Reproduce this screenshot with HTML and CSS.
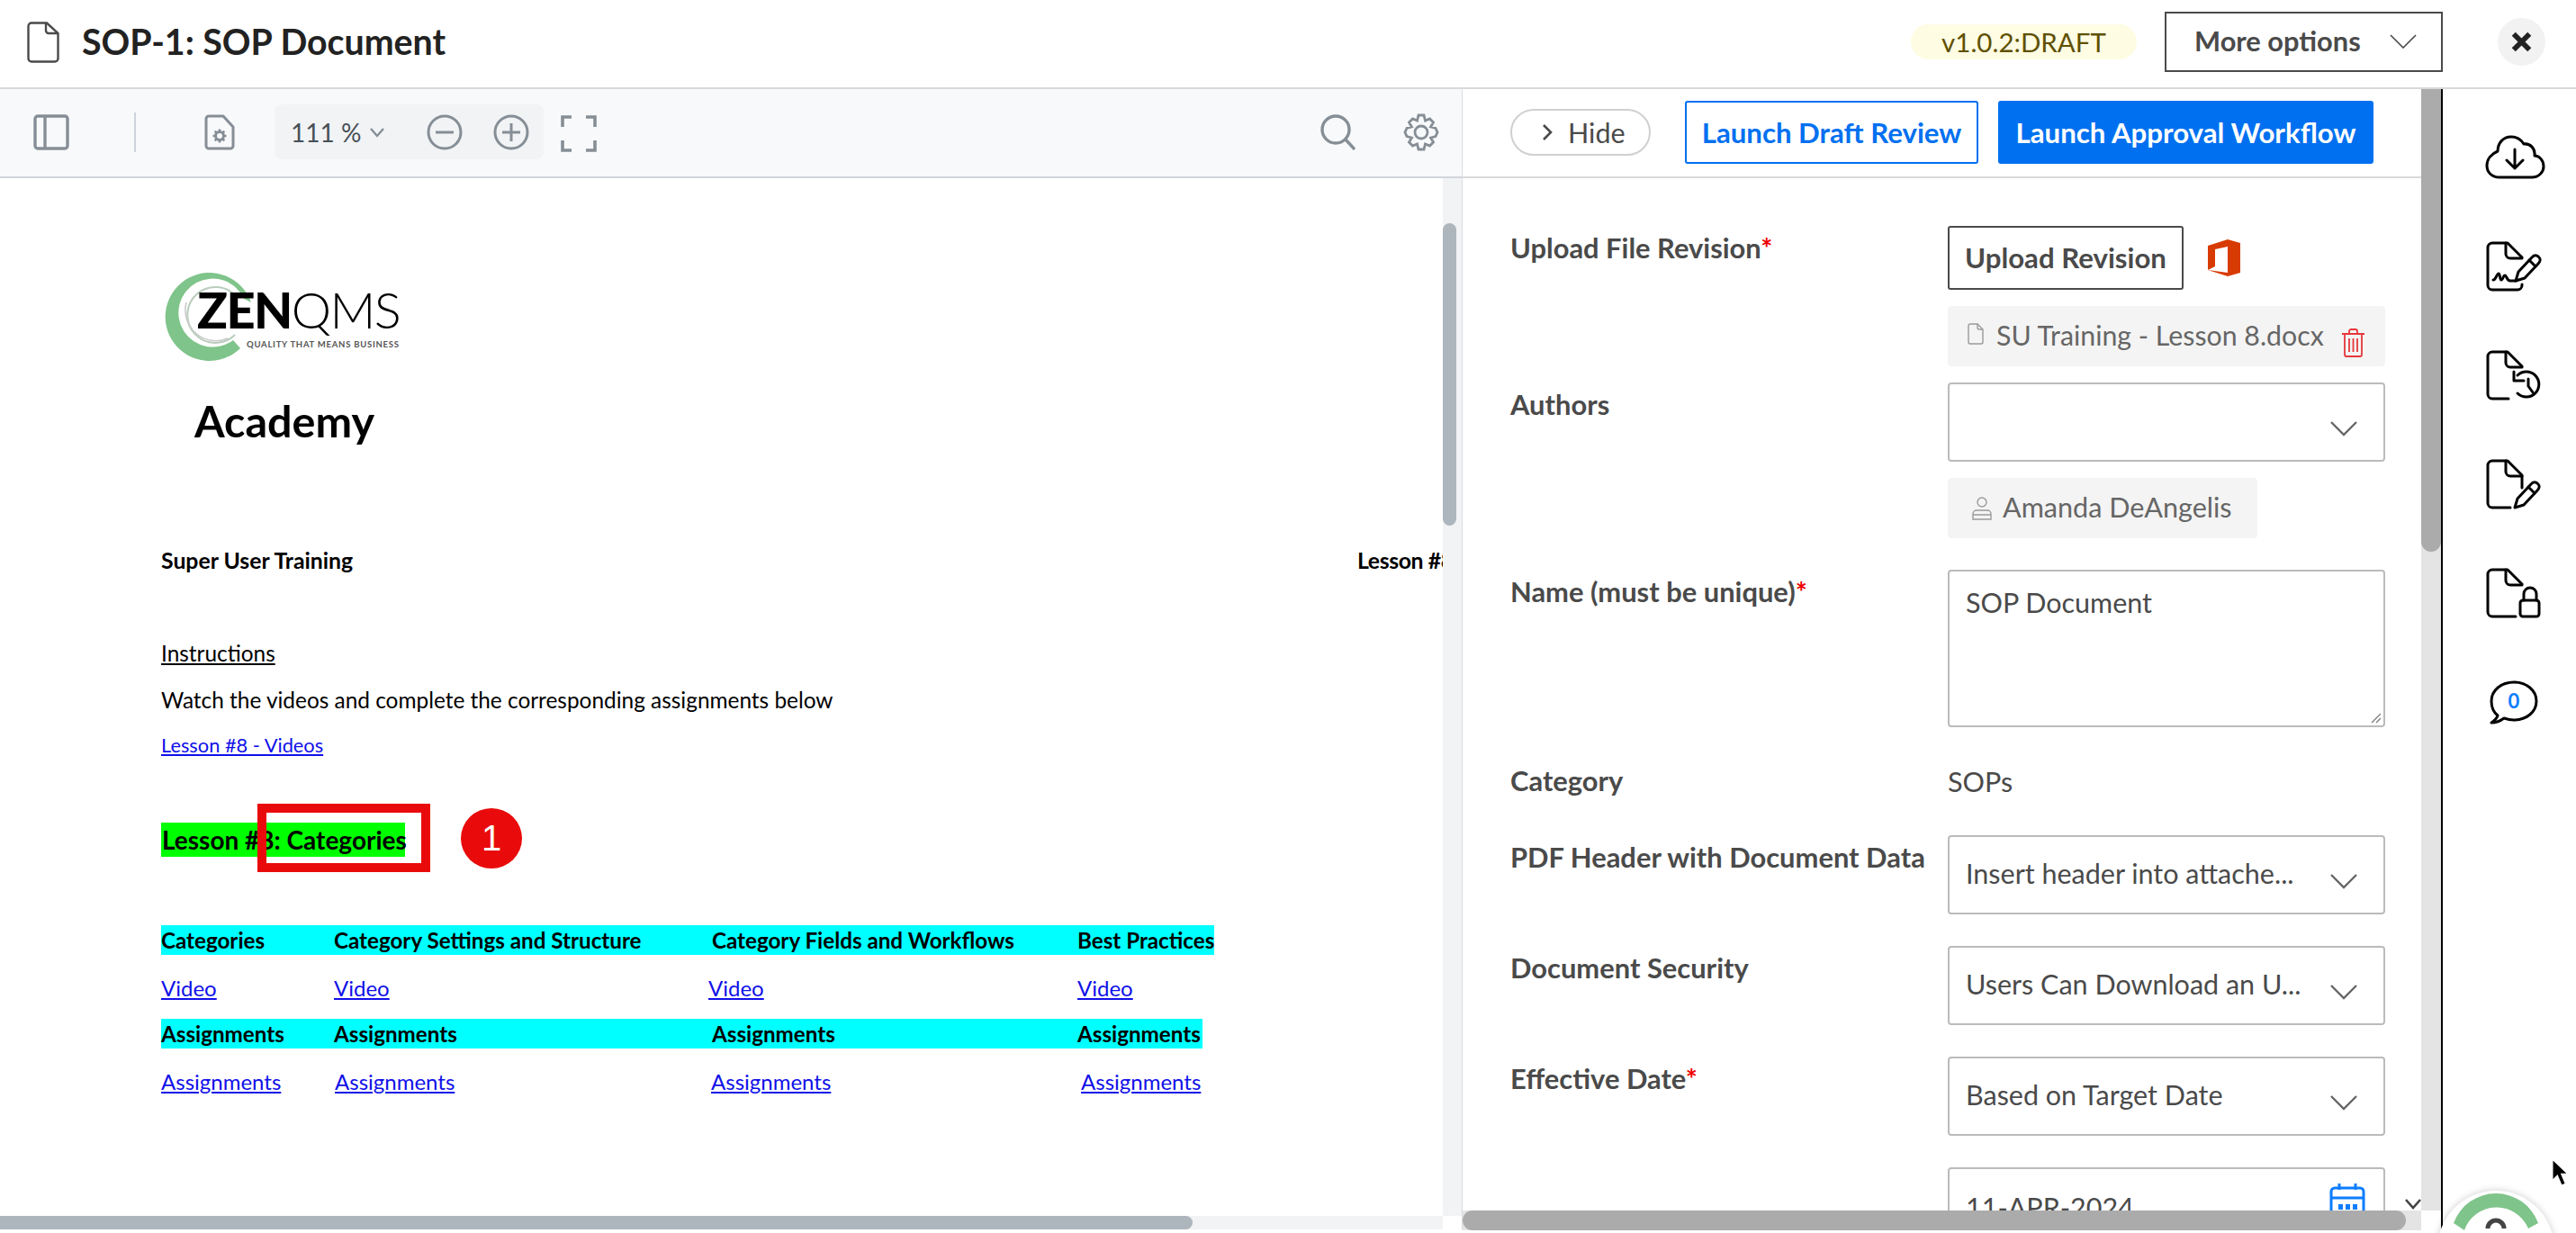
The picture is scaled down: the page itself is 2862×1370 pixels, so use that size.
FILE: index.html
```html
<!DOCTYPE html>
<html lang="en">
<head>
    <meta charset="UTF-8">
    <meta name="viewport" content="width=device-width, initial-scale=1.0">
    <link rel="stylesheet" href="styles.css">
    <title>SOP-1: SOP Document</title>
</head>
<body>

    <!-- Top bar -->
    <header class="topHeader">
        <svg class="headerFile" viewBox="0 0 36 46" fill="none" stroke="#4a4a4a" stroke-width="2.400">
            <path d="M22 1.500H5a3.500 3.500 0 0 0-3.500 3.500V41a3.500 3.500 0 0 0 3.500 3.500H31a3.500 3.500 0 0 0 3.500-3.500V13Z"/>
            <path d="M21 1.500V10a3 3 0 0 0 3 3H34"/>
        </svg>
        <h1 class="docTitle">SOP-1: SOP Document</h1>
        <span class="versionBadge">v1.0.2:DRAFT</span>
        <button type="button" class="moreOptions">
            More options
            <svg class="moreChevron" viewBox="0 0 30 16" fill="none" stroke="#4a4a4a" stroke-width="1.600"><path d="M1 1L15 15L29 1"/></svg>
        </button>
        <button type="button" class="closeBtn">
            <svg viewBox="0 0 20 20" fill="none" stroke="#222" stroke-width="4.600"><path d="M3 3L17 17M17 3L3 17"/></svg>
        </button>
    </header>

    <div class="mainArea">

        <!-- PDF viewer -->
        <section class="viewerPane">
            <div class="viewerToolbar">
                <svg class="toolIcon sidebarIcon" viewBox="0 0 40 40" fill="none" stroke="#868e96" stroke-width="3.400">
                    <rect x="2" y="2" width="36" height="36" rx="3"/><path d="M13 2V38"/>
                </svg>
                <span class="toolDivider"></span>
                <svg class="toolIcon docSettings" viewBox="0 0 34 40" fill="none" stroke="#868e96" stroke-width="3">
                    <path d="M21 2H5a3 3 0 0 0-3 3V35a3 3 0 0 0 3 3H29a3 3 0 0 0 3-3V14Z"/>
                    <circle cx="17" cy="24" r="4.500" stroke-width="3"/>
                    <path d="M17 16.500V19M17 29V31.500M9.500 24H12M22 24H24.500M11.700 18.700L13.500 20.500M20.500 27.500L22.300 29.300M22.300 18.700L20.500 20.500M13.500 27.500L11.700 29.300" stroke-width="2.600"/>
                </svg>
                <div class="zoomPill">
                    <span class="zoomValue">111 %</span>
                    <svg class="zoomChevron" viewBox="0 0 18 12" fill="none" stroke="#868e96" stroke-width="2.400"><path d="M2 2L9 10L16 2"/></svg>
                    <svg class="toolIcon zoomMinus" viewBox="0 0 40 40" fill="none" stroke="#868e96" stroke-width="3"><circle cx="20" cy="20" r="18"/><path d="M10 20H30"/></svg>
                    <svg class="toolIcon zoomPlus" viewBox="0 0 40 40" fill="none" stroke="#868e96" stroke-width="3"><circle cx="20" cy="20" r="18"/><path d="M10 20H30M20 10V30"/></svg>
                </div>
                <svg class="toolIcon fullIcon" viewBox="0 0 40 41" fill="none" stroke="#868e96" stroke-width="3.600">
                    <path d="M12 2H2V13M28 2H38V13M2 28V39H12M38 28V39H28"/>
                </svg>
                <svg class="toolIcon searchIcon" viewBox="0 0 42 40" fill="none" stroke="#868e96" stroke-width="3.400">
                    <circle cx="18" cy="17" r="15"/><path d="M29 28L39 39"/>
                </svg>
                <svg class="toolIcon gearIcon" viewBox="0 0 40 42" fill="none" stroke="#868e96" stroke-width="2.800">
                    <path d="M17 2H23L24.500 8L29.500 6L33.500 10L30.500 15L36 16.500L38 21L36 25.500L30.500 27L33.500 32L29.500 36L24.500 34L23 40H17L15.500 34L10.500 36L6.500 32L9.500 27L4 25.500L2 21L4 16.500L9.500 15L6.500 10L10.500 6L15.500 8Z"/>
                    <circle cx="20" cy="21" r="7"/>
                </svg>
            </div>

            <div class="viewerBody">
                <div class="pdfPage">
                    <div class="zenLogo">
                        <svg class="logoRing" viewBox="0 0 108 104" fill="none">
                            <path fill="#7fc48a" d="M100 36A49 49 0 1 0 88 87L80 78A38 38 0 1 1 92 32Z"/>
                            <path stroke="#b8cdbb" stroke-width="2" d="M82 72A31 31 0 1 1 84 30"/>
                            <path stroke="#c9c9c9" stroke-width="1.500" d="M74 76A34 34 0 0 1 28 36"/>
                        </svg>
                        <span class="logoName"><b>ZEN</b><i>QMS</i></span>
                        <span class="logoTag">QUALITY THAT MEANS BUSINESS</span>
                    </div>
                    <p class="academy">Academy</p>
                    <div class="pdfHeadRow">
                        <b>Super User Training</b>
                        <b class="lessonNo">Lesson #8</b>
                    </div>
                    <p class="instrTitle">Instructions</p>
                    <p class="instrText">Watch the videos and complete the corresponding assignments below</p>
                    <p class="instrLink"><a href="#">Lesson #8 - Videos</a></p>

                    <div class="lessonRow">
                        <span class="lessonTitle">Lesson #8: Categories</span>
                        <span class="redBox"></span>
                        <span class="redDot">1</span>
                    </div>

                    <div class="pdfRow cyanRow rowOne">
                        <b>Categories</b><b>Category Settings and Structure</b><b>Category Fields and Workflows</b><b>Best Practices</b>
                    </div>
                    <div class="pdfRow linkRow rowTwo">
                        <a href="#">Video</a><a href="#">Video</a><a href="#">Video</a><a href="#">Video</a>
                    </div>
                    <div class="pdfRow cyanRow rowThree">
                        <b>Assignments</b><b>Assignments</b><b>Assignments</b><b>Assignments</b>
                    </div>
                    <div class="pdfRow linkRow rowFour">
                        <a href="#">Assignments</a><a href="#">Assignments</a><a href="#">Assignments</a><a href="#">Assignments</a>
                    </div>
                </div>
                <div class="viewerVTrack"><div class="viewerVThumb"></div></div>
            </div>

            <div class="viewerHTrack"><div class="viewerHThumb"></div></div>
        </section>

        <!-- Document form -->
        <section class="formPane">
            <div class="formColumn">
                <div class="formTopBar">
                    <button type="button" class="hideBtn">
                        <svg viewBox="0 0 12 20" fill="none" stroke="#4a4a4a" stroke-width="2.600"><path d="M2 2L10 10L2 18"/></svg>
                        Hide
                    </button>
                    <button type="button" class="draftBtn">Launch Draft Review</button>
                    <button type="button" class="approvalBtn">Launch Approval Workflow</button>
                </div>

                <form class="formBody" action="#" method="post">
                    <div class="formRow tightRow">
                        <label class="fieldLabel">Upload File Revision<span class="required">*</span></label>
                        <div class="fieldStack">
                            <div class="uploadLine">
                                <button type="button" class="uploadBtn">Upload Revision</button>
                                <svg class="officeIcon" viewBox="0 0 36 41">
                                    <path fill="#d83b01" d="M0 7L22 0L36 4V37L22 41L0 34L22 37V8L8 11V30L0 34Z"/>
                                </svg>
                            </div>
                            <div class="chip fileChip">
                                <svg class="chipFile" viewBox="0 0 18 24" fill="none" stroke="#9a9a9a" stroke-width="1.400">
                                    <path d="M11 1H3a2 2 0 0 0-2 2V21a2 2 0 0 0 2 2H15a2 2 0 0 0 2-2V7Z"/><path d="M11 1V5a2 2 0 0 0 2 2H17"/>
                                </svg>
                                <span class="chipText">SU Training - Lesson 8.docx</span>
                                <svg class="trashIcon" viewBox="0 0 27 32" fill="none" stroke="#e5383b" stroke-width="1.800">
                                    <path d="M1 6H26M9 6V3a2 2 0 0 1 2-2H16a2 2 0 0 1 2 2V6M4 6V29a2 2 0 0 0 2 2H21a2 2 0 0 0 2-2V6M9 11V26M13.500 11V26M18 11V26"/>
                                </svg>
                            </div>
                        </div>
                    </div>

                    <div class="formRow">
                        <label class="fieldLabel">Authors</label>
                        <div class="fieldStack">
                            <div class="selectBox"><span></span><svg class="selectChevron" viewBox="0 0 30 17" fill="none" stroke="#666" stroke-width="2.400"><path d="M1 1L15 15L29 1"/></svg></div>
                            <div class="chip authorChip">
                                <svg class="chipUser" viewBox="0 0 22 26" fill="none" stroke="#9a9a9a" stroke-width="1.400">
                                    <circle cx="11" cy="6" r="5"/><path d="M1 25V19a4 4 0 0 1 4-4H17a4 4 0 0 1 4 4V25ZM1 20H21"/>
                                </svg>
                                <span class="chipText">Amanda DeAngelis</span>
                            </div>
                        </div>
                    </div>

                    <div class="formRow">
                        <label class="fieldLabel">Name (must be unique)<span class="required">*</span></label>
                        <div class="textBox">
                            SOP Document
                            <svg class="resizeGrip" viewBox="0 0 12 12" fill="none" stroke="#777" stroke-width="1.200"><path d="M11 1L1 11M11 6L6 11"/></svg>
                        </div>
                    </div>

                    <div class="formRow categoryRow">
                        <label class="fieldLabel">Category</label>
                        <span class="plainValue">SOPs</span>
                    </div>

                    <div class="formRow">
                        <label class="fieldLabel">PDF Header with Document Data</label>
                        <div class="selectBox"><span>Insert header into attache...</span><svg class="selectChevron" viewBox="0 0 30 17" fill="none" stroke="#666" stroke-width="2.400"><path d="M1 1L15 15L29 1"/></svg></div>
                    </div>

                    <div class="formRow">
                        <label class="fieldLabel">Document Security</label>
                        <div class="selectBox"><span>Users Can Download an U...</span><svg class="selectChevron" viewBox="0 0 30 17" fill="none" stroke="#666" stroke-width="2.400"><path d="M1 1L15 15L29 1"/></svg></div>
                    </div>

                    <div class="formRow">
                        <label class="fieldLabel">Effective Date<span class="required">*</span></label>
                        <div class="selectBox"><span>Based on Target Date</span><svg class="selectChevron" viewBox="0 0 30 17" fill="none" stroke="#666" stroke-width="2.400"><path d="M1 1L15 15L29 1"/></svg></div>
                    </div>

                    <div class="formRow">
                        <span></span>
                        <div class="selectBox dateBox">
                            <span>11-APR-2024</span>
                            <svg class="calIcon" viewBox="0 0 40 44" fill="none" stroke="#0d7dff" stroke-width="3">
                                <rect x="2" y="6" width="36" height="36" rx="4"/>
                                <path d="M2 17H38M11 1V8M29 1V8"/>
                                <path d="M10 27H15M18 27H23M26 27H31" stroke-width="6"/>
                            </svg>
                        </div>
                    </div>
                    <svg class="formChevron" viewBox="0 0 18 12" fill="none" stroke="#444" stroke-width="2.600"><path d="M1 1L9 10L17 1"/></svg>
                </form>
            </div>

            <div class="formVTrack"><div class="formVThumb"></div></div>
            <div class="formHTrack"><div class="formHThumb"></div></div>
        </section>

        <!-- Right icon column -->
        <aside class="sideIcons">
            <svg viewBox="0 0 68 60" fill="none" stroke="#000" stroke-width="3" stroke-linecap="round" stroke-linejoin="round">
                <path d="M16 52H52C60 52 65 46 65 40C65 33 60 28 55 28C56 20 50 14 43 15C40 10 35 7 29 7C20 7 14 14 14 23C7 26 2 32 2 39C2 47 8 52 16 52Z"/>
                <path d="M33 21V42M24 33L33 42L42 33"/>
            </svg>
            <svg viewBox="0 0 68 60" fill="none" stroke="#000" stroke-width="3" stroke-linecap="round" stroke-linejoin="round">
                <path d="M41 20L25 4H8a5 5 0 0 0-5 5V51a5 5 0 0 0 5 5H36a5 5 0 0 0 5-5V50"/>
                <path d="M23 4V16a5 5 0 0 0 5 5H41"/>
                <path d="M9 45C12 45 13 38 15 38C17 38 16 45 18 45C20 45 20 40 22 40C24 40 24 46 28 46H34"/>
                <path d="M34 46L37 36L52 20C54 17 58 17 60 20C62 22 61 25 59 27L44 43Z"/>
                <path d="M49 23L56 30"/>
            </svg>
            <svg viewBox="0 0 68 60" fill="none" stroke="#000" stroke-width="3" stroke-linecap="round" stroke-linejoin="round">
                <path d="M41 20L25 4H8a5 5 0 0 0-5 5V51a5 5 0 0 0 5 5H26"/>
                <path d="M23 4V16a5 5 0 0 0 5 5H41"/>
                <path d="M36 30A14 14 0 1 1 36 50"/>
                <path d="M32 26V36H43"/>
                <path d="M48 34V42L53 49"/>
            </svg>
            <svg viewBox="0 0 68 60" fill="none" stroke="#000" stroke-width="3" stroke-linecap="round" stroke-linejoin="round">
                <path d="M41 34V20L25 4H8a5 5 0 0 0-5 5V51a5 5 0 0 0 5 5H28"/>
                <path d="M23 4V16a5 5 0 0 0 5 5H41"/>
                <path d="M33 56L36 46L51 30C53 27 57 27 59 30C61 32 60 35 58 37L43 53Z"/>
                <path d="M48 33L55 40"/>
            </svg>
            <svg viewBox="0 0 68 60" fill="none" stroke="#000" stroke-width="3" stroke-linecap="round" stroke-linejoin="round">
                <path d="M41 20L25 4H8a5 5 0 0 0-5 5V51a5 5 0 0 0 5 5H34"/>
                <path d="M23 4V16a5 5 0 0 0 5 5H41"/>
                <rect x="39" y="38" width="21" height="18" rx="3"/>
                <path d="M43 38V31a7 7 0 0 1 14 0V38"/>
            </svg>
            <svg viewBox="0 0 68 60" fill="none" stroke="#000" stroke-width="3" stroke-linejoin="round">
                <path d="M14 45C9 41 7 35 7 29C7 17 18 8 32 8C46 8 57 17 57 29C57 41 46 50 32 50C28 50 24 49 21 48C17 51 12 53 7 53C10 51 13 48 14 45Z"/>
                <text class="chatCount" x="32" y="37" text-anchor="middle">0</text>
            </svg>
        </aside>
    </div>

    <!-- Floating helper badge and mouse pointer -->
    <div class="helpBadge">
        <svg viewBox="0 0 150 55">
            <path fill="#7fc48a" d="M28 44A50 50 0 0 1 122 44L111 50A38 38 0 0 0 40 52Z"/>
            <path fill="none" stroke="#444" stroke-width="5" d="M66 50A9 9 0 0 1 84 50"/>
        </svg>
    </div>
    <svg class="mousePointer" viewBox="0 0 22 36">
        <path d="M2 1V27L8 21L13 33L18 31L13 19H21Z" fill="#000" stroke="#fff" stroke-width="1.500"/>
    </svg>

</body>
</html>
```

FILE: styles.css
```css
* {
    box-sizing: border-box;
}

html, body {
    margin: 0;
    height: 1370px;
    overflow: hidden;
    background-color: white;
    font-family: Lato, "Open Sans", sans-serif;
    color: #4a4a4a;
}

button {
    font-family: inherit;
    background: none;
    cursor: pointer;
}

/* Top bar */
.topHeader {
    display: flex;
    align-items: center;
    height: 99px;
    padding: 0 34px 4px 30px;
    border-bottom: 2px solid #d9d9d9;
}

.headerFile {
    width: 36px;
    height: 46px;
}

.docTitle {
    margin: 0 0 3px 25px;
    font-size: 39.300px;
    font-weight: 700;
    color: #222;
}

.versionBadge {
    margin-left: auto;
    display: flex;
    align-items: center;
    justify-content: center;
    width: 251px;
    height: 39px;
    padding-bottom: 1px;
    border-radius: 20px;
    background-color: #fefce3;
    color: #5f5000;
    font-size: 29.500px;
}

.moreOptions {
    display: flex;
    align-items: center;
    justify-content: space-between;
    width: 309px;
    height: 67px;
    margin-left: 31px;
    padding: 0 27px 2px 31px;
    border: 2px solid #4a4a4a;
    color: #4a4a4a;
    font-size: 30.800px;
    font-weight: 700;
}

.moreChevron {
    width: 30px;
    height: 16px;
}

.closeBtn {
    display: flex;
    align-items: center;
    justify-content: center;
    width: 53px;
    height: 53px;
    margin-left: 61px;
    padding: 0;
    border: none;
    border-radius: 50%;
    background-color: #f2f2f2;
}

.closeBtn svg {
    width: 25px;
    height: 25px;
}

/* Main area */
.mainArea {
    display: flex;
    height: 1271px;
}

.viewerPane {
    width: 1625px;
    height: 1267px;
    border-right: 1px solid #d9dce1;
}

.viewerToolbar {
    display: flex;
    align-items: center;
    height: 99px;
    padding: 0 0 2px 37px;
    background-color: #f8f9fa;
    border-bottom: 2px solid #d1d5db;
}

.toolIcon {
    flex: none;
    display: block;
}

.sidebarIcon {
    width: 40px;
    height: 40px;
}

.toolDivider {
    width: 2px;
    height: 44px;
    margin-left: 72px;
    background-color: #ced4da;
}

.docSettings {
    width: 34px;
    height: 40px;
    margin-left: 76px;
}

.zoomPill {
    display: flex;
    align-items: center;
    width: 299px;
    height: 61px;
    margin-left: 44px;
    padding-left: 18px;
    border-radius: 8px;
    background-color: #f1f3f5;
}

.zoomValue {
    width: 87px;
    font-size: 28px;
    color: #495057;
}

.zoomChevron {
    width: 18px;
    height: 12px;
}

.zoomMinus {
    width: 40px;
    height: 40px;
    margin-left: 46px;
}

.zoomPlus {
    width: 40px;
    height: 40px;
    margin-left: 34px;
}

.fullIcon {
    width: 40px;
    height: 41px;
    margin: 3px 0 0 19px;
}

.searchIcon {
    width: 42px;
    height: 40px;
    margin-left: 803px;
}

.gearIcon {
    width: 40px;
    height: 42px;
    margin-left: 51px;
}

.viewerBody {
    display: flex;
    height: 1153px;
}

.pdfPage {
    width: 1603px;
    padding: 104px 0 0 179px;
    overflow: hidden;
    color: #000;
    font-size: 24.400px;
}

.pdfPage p {
    margin: 0;
}

.pdfPage a {
    color: #1010e8;
}

/* Logo inside the PDF */
.zenLogo {
    position: relative;
    width: 270px;
    height: 96px;
}

.logoRing {
    position: absolute;
    left: 0;
    top: -2px;
    width: 108px;
    height: 104px;
}

.logoName {
    position: absolute;
    left: 40px;
    top: 14px;
    font-size: 56px;
    line-height: 56px;
    white-space: nowrap;
    letter-spacing: -1.600px;
    background-color: transparent;
}

.logoName b {
    font-weight: 900;
}

.logoName i {
    font-style: normal;
    font-weight: 300;
}

.logoTag {
    position: absolute;
    left: 93px;
    top: 75px;
    padding-left: 2px;
    background-color: white;
    font-size: 9.500px;
    letter-spacing: 0.750px;
    white-space: nowrap;
    color: #555;
    font-weight: 700;
}

.academy {
    margin: 38px 0 0 37px !important;
    font-size: 48.500px;
    font-weight: 700;
    line-height: 62px;
}

.pdfHeadRow {
    display: grid;
    grid-template-columns: 1329px 200px;
    margin-top: 109px;
    font-size: 24.800px;
    line-height: 32px;
}

.lessonNo {
    letter-spacing: -0.400px;
}

.instrTitle {
    margin-top: 71px !important;
    line-height: 32px;
    text-decoration: underline;
}

.instrText {
    margin-top: 20px !important;
    line-height: 32px;
}

.instrLink {
    margin-top: 18px !important;
    line-height: 32px;
    font-size: 21.800px;
}

.lessonRow {
    display: flex;
    align-items: center;
    position: relative;
    height: 38px;
    margin-top: 70px;
}

.lessonTitle {
    width: 271px;
    height: 38px;
    padding-left: 1px;
    background-color: #00ff00;
    font-size: 28px;
    font-weight: 700;
    line-height: 38px;
    white-space: nowrap;
}

.redBox {
    position: absolute;
    left: 107px;
    top: -21px;
    width: 192px;
    height: 76px;
    border: 10px solid #e90b0b;
}

.redDot {
    position: absolute;
    left: 333px;
    top: -16px;
    width: 68px;
    height: 67px;
    display: flex;
    align-items: center;
    justify-content: center;
    border-radius: 50%;
    background-color: #e90b0b;
    color: white;
    font-family: "Liberation Sans", sans-serif;
    font-size: 40px;
}

.pdfRow {
    display: grid;
    line-height: 33px;
    white-space: nowrap;
}

.cyanRow {
    height: 33px;
    background-color: #00ffff;
    font-size: 24.200px;
}

.rowOne {
    grid-template-columns: 192px 420px 406px auto;
    width: 1170px;
    margin-top: 76px;
}

.rowTwo {
    grid-template-columns: 192px 416px 410px auto;
    height: 71px;
    line-height: 73px;
    font-size: 24px;
}

.rowThree {
    grid-template-columns: 192px 420px 406px auto;
    width: 1157px;
}

.rowFour {
    grid-template-columns: 193px 418px 411px auto;
    line-height: 73px;
    font-size: 24px;
}

.viewerVTrack {
    width: 21px;
    background-color: #f1f3f5;
}

.viewerVThumb {
    width: 15px;
    height: 336px;
    margin-top: 50px;
    border-radius: 8px;
    background-color: #adb5bd;
}

.viewerHTrack {
    width: 1603px;
    height: 15px;
    background-color: #f1f3f5;
}

.viewerHThumb {
    width: 1325px;
    height: 15px;
    border-radius: 0 8px 8px 0;
    background-color: #adb5bd;
}

/* Form panel */
.formPane {
    display: grid;
    grid-template-columns: 1065px 22px;
    grid-template-rows: 1246px 22px;
    width: 1087px;
}

.formColumn {
    display: flex;
    flex-direction: column;
    position: relative;
    overflow: hidden;
}

.formTopBar {
    display: flex;
    align-items: center;
    flex: none;
    height: 99px;
    padding: 0 0 2px 53px;
    border-bottom: 2px solid #d9d9d9;
}

.hideBtn {
    display: flex;
    align-items: center;
    gap: 17px;
    width: 156px;
    height: 52px;
    padding-left: 33px;
    border: 2px solid #d0d0d0;
    border-radius: 26px;
    color: #4a4a4a;
    font-size: 30.500px;
}

.hideBtn svg {
    width: 12px;
    height: 20px;
}

.draftBtn {
    width: 326px;
    height: 70px;
    margin-left: 38px;
    padding: 0;
    border: 2px solid #0070f0;
    border-radius: 3px;
    color: #0070f0;
    font-size: 31.200px;
    font-weight: 700;
}

.approvalBtn {
    width: 417px;
    height: 70px;
    margin-left: 22px;
    padding: 0;
    border: none;
    border-radius: 3px;
    background-color: #0070f0;
    color: white;
    font-size: 31.200px;
    font-weight: 700;
}

.formBody {
    flex: 1;
    padding: 53px 0 0 53px;
}

.formRow {
    display: grid;
    grid-template-columns: 486px 486px;
    margin-bottom: 35px;
}

.tightRow {
    margin-bottom: 18px;
}

.categoryRow {
    height: 50px;
}

.categoryRow .fieldLabel {
    line-height: 50px;
}

.fieldLabel {
    font-size: 30.900px;
    font-weight: 700;
    line-height: 49px;
    white-space: nowrap;
}

.required {
    color: #f00000;
}

.fieldStack {
    display: flex;
    flex-direction: column;
    gap: 18px;
}

.uploadLine {
    display: flex;
    align-items: center;
}

.uploadBtn {
    width: 262px;
    height: 71px;
    padding: 0 0 2px;
    border: 2px solid #4a4a4a;
    border-radius: 3px;
    color: #4a4a4a;
    font-size: 31.200px;
    font-weight: 700;
}

.officeIcon {
    width: 36px;
    height: 41px;
    margin-left: 27px;
}

.chip {
    display: flex;
    align-items: center;
    height: 67px;
    border-radius: 4px;
    background-color: #f4f4f4;
}

.chipText {
    margin-bottom: 3px;
    font-size: 30.300px;
    color: #666;
}

.authorChip .chipText {
    font-size: 30.600px;
}

.fileChip {
    padding-left: 22px;
}

.chipFile {
    width: 18px;
    height: 24px;
    margin: -6px 14px 0 0;
}

.trashIcon {
    width: 27px;
    height: 32px;
    margin: 14px 0 0 19px;
}

.authorChip {
    width: 344px;
    padding-left: 27px;
}

.chipUser {
    width: 22px;
    height: 26px;
    margin-right: 12px;
}

.selectBox {
    display: flex;
    align-items: center;
    justify-content: space-between;
    height: 88px;
    padding: 0 29px 5px 18px;
    border: 2px solid #bbb;
    border-radius: 4px;
    font-size: 30.500px;
    white-space: nowrap;
}

.selectChevron {
    width: 30px;
    height: 17px;
    margin-top: 19px;
}

.textBox {
    position: relative;
    height: 175px;
    padding: 16px 18px;
    border: 2px solid #bbb;
    border-radius: 4px;
    font-size: 30.500px;
    line-height: 36px;
}

.resizeGrip {
    position: absolute;
    right: 2px;
    bottom: 2px;
    width: 12px;
    height: 12px;
}

.plainValue {
    font-size: 30.500px;
    line-height: 50px;
}

.calIcon {
    width: 40px;
    height: 44px;
    margin: -10px -9px 0 0;
}

.dateBox {
    padding-bottom: 0;
}

.formChevron {
    position: absolute;
    left: 1047px;
    top: 1233px;
    width: 18px;
    height: 12px;
}

.formVTrack {
    background-color: #e4e4e4;
}

.formVThumb {
    height: 514px;
    border-radius: 0 0 11px 11px;
    background-color: #ababab;
}

.formHTrack {
    background-color: #e4e4e4;
}

.formHThumb {
    width: 1048px;
    height: 22px;
    border-radius: 11px;
    background-color: #ababab;
}

/* Right icon column */
.sideIcons {
    display: flex;
    flex-direction: column;
    gap: 61px;
    width: 150px;
    padding: 46px 0 0 47px;
    border-left: 2px solid #000;
}

.sideIcons svg {
    width: 68px;
    height: 60px;
}

.chatCount {
    fill: #0d7dff;
    stroke: none;
    font-family: Lato, sans-serif;
    font-size: 22px;
    font-weight: 700;
}

/* Floating bits */
.helpBadge {
    position: absolute;
    left: 2698px;
    top: 1315px;
    width: 150px;
    height: 55px;
    overflow: hidden;
}

.helpBadge::before {
    content: "";
    position: absolute;
    left: 10px;
    top: 8px;
    width: 130px;
    height: 130px;
    border-radius: 50%;
    background-color: white;
    box-shadow: 0 0 8px rgba(0, 0, 0, 0.2);
}

.helpBadge svg {
    position: relative;
    display: block;
    width: 150px;
    height: 55px;
}

.mousePointer {
    position: absolute;
    left: 2834px;
    top: 1287px;
    width: 20px;
    height: 33px;
}
```
